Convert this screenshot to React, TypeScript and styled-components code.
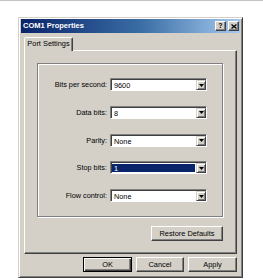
import React from 'react';
import styled, { createGlobalStyle } from 'styled-components';

const GlobalStyle = createGlobalStyle`
  html, body { margin: 0; padding: 0; background: #fff; }
  body { font-family: "Liberation Sans", Arial, sans-serif; color: #000; }
`;

const FACE = '#d4d0c8';

const Page = styled.div`
  width: 263px;
  height: 280px;
  box-sizing: border-box;
  border-top: 1px solid #c4c4c4;
  padding: 16px 0 0 18px;
`;

const Window = styled.div`
  width: 225px;
  height: 261px;
  box-sizing: border-box;
  background: ${FACE};
  border: 1px solid;
  border-color: ${FACE} #404040 #404040 ${FACE};
  box-shadow: inset 1px 1px 0 #fff, inset -1px -1px 0 #808080;
  padding: 1px 2px 2px 2px;
  display: flex;
  flex-direction: column;
`;

const TitleBar = styled.div`
  height: 14px;
  display: flex;
  align-items: center;
  padding: 0 1px 0 2px;
  background: linear-gradient(to right, #0a246a 0%, #3a6ea5 55%, #a6caf0 100%);
`;

const Title = styled.div`
  flex: 1;
  color: #fff;
  font-weight: bold;
  font-size: 7.5px;
  line-height: 14px;
`;

const CaptionButtons = styled.div`
  display: flex;
  gap: 2px;
`;

const CaptionButton = styled.div`
  width: 11px;
  height: 10px;
  box-sizing: border-box;
  background: ${FACE};
  border: 1px solid;
  border-color: #fff #404040 #404040 #fff;
  box-shadow: inset -1px -1px 0 #808080;
  display: flex;
  align-items: center;
  justify-content: center;
  font-weight: bold;
  font-size: 7px;
  line-height: 8px;
`;

const Body = styled.div`
  flex: 1;
  display: flex;
  flex-direction: column;
  padding: 4px 3px 3px 3px;
`;

const TabStrip = styled.div`
  display: flex;
  height: 13px;
`;

const Tab = styled.div`
  position: relative;
  z-index: 1;
  width: 49px;
  height: 14px;
  box-sizing: border-box;
  background: ${FACE};
  border: 1px solid;
  border-bottom: none;
  border-color: #fff #404040 transparent #fff;
  box-shadow: inset -1px 0 0 #808080;
  border-radius: 2px 2px 0 0;
  font-size: 7.4px;
  line-height: 12px;
  text-align: center;
`;

const Panel = styled.div`
  height: 204px;
  box-sizing: border-box;
  border: 1px solid;
  border-color: #fff #404040 #404040 #fff;
  box-shadow: inset -1px -1px 0 #808080;
  padding: 12px 13px 0 12px;
  display: flex;
  flex-direction: column;
`;

const GroupBox = styled.div`
  height: 154px;
  box-sizing: border-box;
  border: 1px solid #808080;
  box-shadow: inset 1px 1px 0 #fff, 1px 1px 0 #fff;
  padding: 14px 15px 0 0;
`;

const Fields = styled.div`
  display: grid;
  grid-template-columns: 1fr 97px;
  grid-auto-rows: 13px;
  column-gap: 3px;
  row-gap: 14.8px;
  align-items: center;
`;

const Label = styled.div`
  text-align: right;
  font-size: 7.3px;
  line-height: 13px;
  white-space: nowrap;
`;

const Combo = styled.div`
  height: 13px;
  box-sizing: border-box;
  border: 1px solid;
  border-color: #808080 #fff #fff #808080;
  box-shadow: inset 1px 1px 0 #404040;
  background: #fff;
  display: flex;
  padding: 1px 0 0 1px;
`;

const ComboValue = styled.div<{ $selected?: boolean }>`
  flex: 1;
  margin: 1px 1px 1px 0;
  padding-left: 2px;
  font-size: 7.3px;
  line-height: 9px;
  background: ${p => (p.$selected ? '#0a246a' : 'transparent')};
  color: ${p => (p.$selected ? '#fff' : '#000')};
`;

const ComboArrow = styled.div`
  width: 10px;
  box-sizing: border-box;
  background: ${FACE};
  border: 1px solid;
  border-color: ${FACE} #404040 #404040 ${FACE};
  box-shadow: inset 1px 1px 0 #fff, inset -1px -1px 0 #808080;
  display: flex;
  align-items: center;
  justify-content: center;
`;

const PanelFooter = styled.div`
  display: flex;
  justify-content: flex-end;
  padding-top: 9px;
  margin-right: 0px;
`;

const Button = styled.div<{ $width: number; $default?: boolean }>`
  width: ${p => p.$width}px;
  height: 15px;
  box-sizing: border-box;
  background: ${FACE};
  border: 1px solid;
  border-color: ${p => (p.$default ? '#000' : `#fff #404040 #404040 #fff`)};
  box-shadow: ${p =>
    p.$default
      ? 'inset 1px 1px 0 #fff, inset -1px -1px 0 #404040, inset -2px -2px 0 #808080'
      : 'inset -1px -1px 0 #808080'};
  font-size: 7.4px;
  line-height: 13px;
  text-align: center;
`;

const DialogButtons = styled.div`
  display: flex;
  justify-content: flex-end;
  gap: 4px;
  padding-top: 3px;
`;

const Arrow = () => (
  <svg width="5" height="3" viewBox="0 0 5 3">
    <path d="M0 0h5L2.5 3z" fill="#000" />
  </svg>
);

const CloseGlyph = () => (
  <svg width="6" height="5" viewBox="0 0 6 5">
    <path d="M0.5 0.5L5.5 4.5M5.5 0.5L0.5 4.5" stroke="#000" strokeWidth="1.3" />
  </svg>
);

const fields = [
  { label: 'Bits per second:', value: '9600' },
  { label: 'Data bits:', value: '8' },
  { label: 'Parity:', value: 'None' },
  { label: 'Stop bits:', value: '1', selected: true },
  { label: 'Flow control:', value: 'None' },
];

export default function App() {
  return (
    <>
      <GlobalStyle />
      <Page>
        <Window>
          <TitleBar>
            <Title>COM1 Properties</Title>
            <CaptionButtons>
              <CaptionButton>?</CaptionButton>
              <CaptionButton>
                <CloseGlyph />
              </CaptionButton>
            </CaptionButtons>
          </TitleBar>
          <Body>
            <TabStrip>
              <Tab>Port Settings</Tab>
            </TabStrip>
            <Panel>
              <GroupBox>
                <Fields>
                  {fields.map(f => (
                    <React.Fragment key={f.label}>
                      <Label>{f.label}</Label>
                      <Combo>
                        <ComboValue $selected={f.selected}>{f.value}</ComboValue>
                        <ComboArrow>
                          <Arrow />
                        </ComboArrow>
                      </Combo>
                    </React.Fragment>
                  ))}
                </Fields>
              </GroupBox>
              <PanelFooter>
                <Button $width={72}>Restore Defaults</Button>
              </PanelFooter>
            </Panel>
            <DialogButtons>
              <Button $width={49} $default>OK</Button>
              <Button $width={48}>Cancel</Button>
              <Button $width={49}>Apply</Button>
            </DialogButtons>
          </Body>
        </Window>
      </Page>
    </>
  );
}
